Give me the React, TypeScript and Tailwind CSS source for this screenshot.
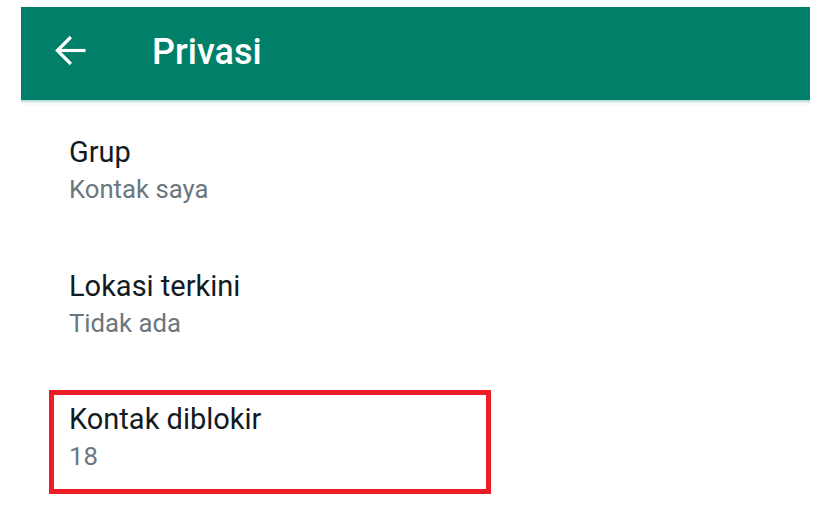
type Row = { title: string; value: string; marked?: boolean };

const rows: Row[] = [
  { title: 'Grup', value: 'Kontak saya' },
  { title: 'Lokasi terkini', value: 'Tidak ada' },
  { title: 'Kontak diblokir', value: '18', marked: true },
];

function BackIcon() {
  return (
    <svg
      width="45"
      height="45"
      viewBox="0 0 24 24"
      fill="none"
      stroke="#ffffff"
      strokeWidth="1.7"
      strokeLinecap="butt"
      strokeLinejoin="miter"
      className="block"
    >
      <path d="M20 12H5.4" />
      <path d="M12.2 4.8L5 12l7.2 7.2" />
    </svg>
  );
}

function PrivacyRow({ row }: { row: Row }) {
  const inner = (
    <>
      <div className="text-[29px] leading-[34px] text-[#111b21]">{row.title}</div>
      <div className="mt-[5px] text-[25.7px] leading-[30px] text-[#6b777e]">{row.value}</div>
    </>
  );

  if (row.marked) {
    return (
      <div className="ml-[28px] mt-[52px] w-[442px] border-[5px] border-[#ee1c25] pl-[15px] pt-[7px] pb-[18px]">
        {inner}
      </div>
    );
  }

  return <div className="ml-[48px] mt-[65px] first:mt-0">{inner}</div>;
}

export default function App() {
  return (
    <div className="min-h-screen bg-white pt-[7px]" style={{ fontFamily: 'Roboto, "Noto Sans", sans-serif' }}>
      <div className="ml-[21px] w-[789px]">
        <header className="flex h-[93px] items-start bg-[#017f68]">
          <div className="ml-[27px] mt-[21px]">
            <BackIcon />
          </div>
          <h1 className="ml-[59px] mt-[24px] text-[36px] font-medium leading-[42px] text-white">Privasi</h1>
        </header>
        <div className="h-[2px] bg-[#bfe3dc]" />
        <div className="h-[4px] bg-gradient-to-b from-[#eef3f2] to-white" />
        <div className="mt-[29px] flex flex-col">
          {rows.map((row) => (
            <PrivacyRow key={row.title} row={row} />
          ))}
        </div>
      </div>
    </div>
  );
}
